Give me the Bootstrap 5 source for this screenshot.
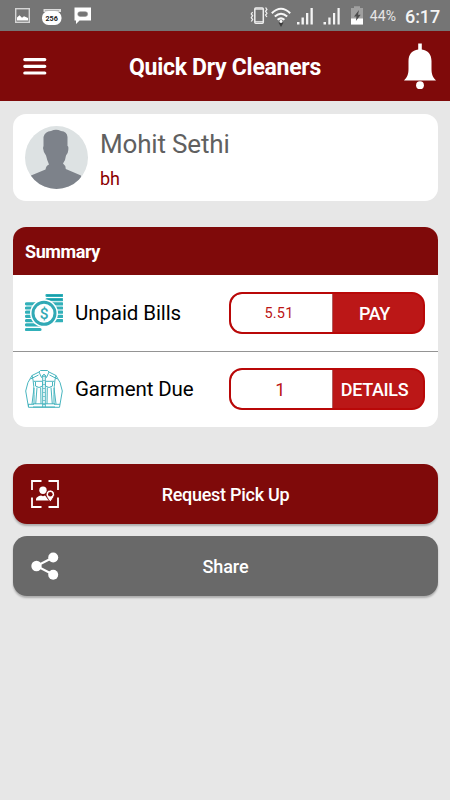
<!DOCTYPE html>
<html lang="en">
<head>
<meta charset="utf-8">
<meta name="viewport" content="width=device-width, initial-scale=1">
<title>Quick Dry Cleaners</title>
<link href="https://cdn.jsdelivr.net/npm/bootstrap@5.3.0/dist/css/bootstrap.min.css" rel="stylesheet">
<style>
body{font-family:Roboto,"Liberation Sans",sans-serif;background:#e7e7e7;min-height:800px;overflow:hidden}
svg{display:block;flex:none}
.status-bar{height:31px;background:#757575;color:#f4f4f4}
.status-right{padding-right:11px}
.battery-text{font-size:14px;line-height:31px;margin-left:6px;padding-top:1px;color:#e6e6e6;letter-spacing:.1px}
.clock{font-size:18px;line-height:31px;font-weight:500;margin-left:9px;width:34px;letter-spacing:-.1px;padding-top:1px;white-space:nowrap}
.app-bar{height:70px;background:#7f0a0a;color:#fff;padding:0 14px 1px 22px}
.app-title{font-size:23px;font-weight:700;letter-spacing:-.28px;line-height:28px;padding:4px 1px 0 0}
.page{padding:12.5px 12.5px 0}
.panel{border:0;border-radius:13px;overflow:hidden}
.profile{height:87.5px;padding:0 12.5px}
.person{font-size:26px;line-height:30px;color:#606060;letter-spacing:-.17px;padding-top:4px}
.place{font-size:18px;line-height:22px;color:#8b0000;margin-top:9px}
.summary{margin-top:25.5px;height:200px}
.summary-head{height:48.5px;background:#7f0a0a;color:#fff;padding:2px 12.5px 0;font-size:18px;font-weight:700;letter-spacing:-.4px}
.item{height:75.5px;padding:0 12.5px;color:#000;font-size:20.5px;letter-spacing:-.1px}
.item+.item{border-top:1px solid #949494}
.item-label{margin-left:12px;padding-top:2px}
.pill{width:196px;height:42px;border:2px solid #b90808;border-radius:13px;overflow:hidden;background:#b90808}
.pill-value{width:101px;background:#fff;border-radius:11px 0 0 11px;color:#bb1616;font-size:14.5px;letter-spacing:.15px;padding:3px 5px 0 0}
.pill-value.count{font-size:18px;padding:1px 2px 0 0}
.pill-btn{background:#bb1717;color:#fff;font-size:18px;font-weight:500;letter-spacing:-.35px;border:0;border-left:1px solid #b06060;border-radius:0;padding:2px 7px 0 0}
.pill-btn:hover{background:#bb1717;color:#fff}
.action{height:60px;border:0;border-radius:14px;color:#fff;font-size:18px;font-weight:500;letter-spacing:-.27px;padding:0 18px;box-shadow:0 2px 2px rgba(0,0,0,.25)}
.action span{margin-right:27px;padding-top:1px}
.pickup,.pickup:hover{background:#7f0a0a;color:#fff}
.share,.share:hover{background:#696969;color:#fff}
.share{letter-spacing:-.1px}
.actions{margin-top:37.5px;gap:12.3px}
</style>
<script src="https://cdn.jsdelivr.net/npm/bootstrap@5.3.0/dist/js/bootstrap.bundle.min.js"></script>
</head>
<body>
<div class="status-bar d-flex align-items-center">
  <svg width="100" height="31" viewBox="0 0 100 31">
    <rect x="15.7" y="8.700" width="13.600" height="13.600" fill="none" stroke="#d5d5d5" stroke-width="1.400"/>
    <path d="M17 20.500v-3l2.500-2.200 2.500 2.500 2-1.500 4 1.800v2.400z" fill="#fff"/>
    <path d="M43.500 9h17.500v3H43.500z" fill="#dcdcdc"/><path d="M45 10.200h14v1H45z" fill="#aaa"/>
    <rect x="42" y="11" width="19.500" height="14" rx="6.500" fill="#fff"/>
    <text x="51.700" y="21.300" text-anchor="middle" font-family="Roboto" font-size="7.200" font-weight="700" fill="#222">256</text>
    <path d="M74.500 7.500H91V20.500H79.500L76 24v-3.500h-1.500z" fill="#fff"/>
    <rect x="77.700" y="11.700" width="10" height="4.800" rx="2.400" fill="#757575" stroke="#999" stroke-width=".6"/>
  </svg>
  <div class="status-right ms-auto d-flex align-items-center">
    <svg width="116" height="31" viewBox="247 0 116 31">
      <rect x="253.800" y="8" width="8.500" height="15.300" rx="1" fill="none" stroke="#eee" stroke-width="1.500"/><path d="M254 9.200h8M254 21.700h8" stroke="#eee"/>
      <path d="M251.600 12l-1.300 2 1.300 1.700-1.300 2 1.300 1.800-1.300 2M264.600 7.500l1.300 2-1.300 1.800 1.300 2-1.300 1.700 1.300 2" fill="none" stroke="#eee" stroke-width="1.300"/>
      <path d="M270.800 13.200Q280 4.400 289.200 13.200M273.800 16.600Q280 10.800 286.200 16.600M276.600 19.800Q280 16.900 283.400 19.800" fill="none" stroke="#f7f7f7" stroke-width="2"/>
      <path d="M277.500 22.500h5l-2.500 4.500z" fill="#3d3d3d"/><circle cx="280" cy="21.500" r="1.400" fill="#fff"/>
      <path d="M296 22h2.500v2.400H296zM300.500 17.500h2.400v6.900h-2.400zM305 13h2.300v11.400H305zM309.500 8h2.300v16.400h-2.300z" fill="#f4f4f4"/>
      <path d="M322.500 22h2.500v2.400h-2.500zM327.300 17.500h2.300v6.900h-2.300zM332 13h2.200v11.400H332zM336.500 8h2.200v16.400h-2.200z" fill="#f4f4f4"/>
      <path d="M350 8h3V6.300h6V8h3v16.500h-12z" fill="#a0a0a0"/><path d="M350 18.500h12v6h-12z" fill="#fff"/><path d="M358 10l-5 6.500h2.500l-.6 4.500 4.800-6.300H357z" fill="#4e4e4e"/>
    </svg>
    <div class="battery-text">44%</div><div class="clock">6:17</div>
  </div>
</div>
<nav class="app-bar d-flex align-items-center justify-content-between">
  <svg width="25" height="19" viewBox="0 0 25 19"><path d="M2.800 3.600h20M2.800 10.300h20M2.800 17h20" stroke="#fff" stroke-width="3.200" stroke-linecap="round"/></svg>
  <div class="app-title">Quick Dry Cleaners</div>
  <svg width="32" height="48" viewBox="0 0 32 48"><path d="M14.200 1.500h3.600v6C24 8.300 27.500 12.500 27.500 19v8C27.500 32.500 29 35.500 32 38.500H0c3-3 4.500-6 4.500-11.500v-8C4.500 12.500 8 8.300 14.200 7.500z" fill="#fff"/><circle cx="16" cy="43.200" r="3.900" fill="#fff"/></svg>
</nav>
<main class="page">
  <section class="card panel profile flex-row align-items-center">
    <svg width="63" height="63" viewBox="0 0 63 63"><defs><clipPath id="face"><circle cx="31.500" cy="31.500" r="31.500"/></clipPath></defs><g clip-path="url(#face)"><path d="M0 0h63v63H0z" fill="#dde2e3"/><path d="M18.500 20V11Q20 5.500 26 5Q31 2.500 36 5Q42 5.500 42.500 11V20Q43.700 20 43.300 24Q43 28 41 29.500Q40.500 34.500 38 37.500Q40.500 39 40.800 43L56 49.500L58 63H4l2-13.500L20.500 43.500Q21 39.500 24 38.500Q22 34 21 29.500Q18.500 27 18 22Z" fill="#7d828a"/></g></svg>
    <div class="ms-2 ps-1"><div class="person">Mohit Sethi</div><div class="place">bh</div></div>
  </section>
  <section class="card panel summary">
    <div class="summary-head d-flex align-items-center">Summary</div>
    <div class="item d-flex align-items-center">
      <svg width="38" height="38" viewBox="0 0 38 38"><path d="M22 1.400h15M22 5.600h15M22 9.800h15M22 14h15M22 18.200h15M22 22.400h15M22 26.600h15M1.500 9.800H16M1.500 14H16M1.500 18.200H16M1.500 22.400H16M1.500 26.600H16M1.500 30.800H15M1.500 35.500H15" stroke="#31b0b9" stroke-width="3.200" stroke-linecap="round"/><path d="M22 1.400h15M22 5.600h15" stroke="#169ba8"/><circle cx="19" cy="19.300" r="14" fill="#fff"/><circle cx="19" cy="19.300" r="11" fill="#fff" stroke="#31a9b5" stroke-width="3"/><text x="19" y="24.800" text-anchor="middle" font-family="Roboto" font-size="15.500" font-weight="500" fill="#31a9b5">$</text></svg>
      <div class="item-label">Unpaid Bills</div>
      <div class="pill d-flex ms-auto"><div class="pill-value d-flex align-items-center justify-content-center">5.51</div><button class="btn pill-btn flex-fill">PAY</button></div>
    </div>
    <div class="item d-flex align-items-center">
      <svg width="38" height="38" viewBox="0 0 38 38" fill="none" stroke="#48b5bf" stroke-width="1"><path d="M14 2l-7 3.500Q2 12 .7 21L3.500 37.300h31L37.300 21Q36 12 31 5.500L24 2M14 2l1.500-1.500h7L24 2l-2.500 5.500L19 4l-2.500 3.500zM7 5.500Q9.500 13 9 34M31 5.500Q28.500 13 29 34M3 34.300h6M29 34.300h6M8 33.800h22M8 37h22M17.700 5v32M20.300 5v32M8.700 11.300h9M20.300 11.300h9M10.500 12v4l3.500 1.500 3.500-1.500v-4M20.500 12v4l3.500 1.500 3.500-1.500v-4M12 17.500L10.700 34M15.700 17.500L16 34M26 17.500L27.300 34M22.300 17.500L22 34M3.500 37V34M9 18L7 34M29 18l2 16M5.500 9l8-4M32.500 9l-8-4"/><path d="M19 6v30" stroke-dasharray="1 3" stroke="#169ba8"/></svg>
      <div class="item-label">Garment Due</div>
      <div class="pill d-flex ms-auto"><div class="pill-value count d-flex align-items-center justify-content-center">1</div><button class="btn pill-btn flex-fill">DETAILS</button></div>
    </div>
  </section>
  <div class="actions d-flex flex-column">
    <button class="btn action pickup d-flex align-items-center">
      <svg width="28" height="28" viewBox="0 0 28 28"><path d="M1 10V1h9.500M17.500 1H27v9M27 17.500v9.500h-9.500M10.500 27H1v-9.500" fill="none" stroke="#fff" stroke-width="1.800"/><circle cx="12" cy="10.300" r="3.700" fill="#fff"/><path d="M5 20.500v-1.500q.5-2.500 5-3.500l2 .8 2-.8 4.500 5z" fill="#fff"/><path d="M19.300 22q-4.300-5.300-4.300-7.800a4.300 4.300 0 0 1 8.600 0Q23.600 16.700 19.300 22z" fill="#fff" stroke="#7f0a0a" stroke-width="1"/><circle cx="19.300" cy="14.200" r="2.300" fill="#7f0a0a"/></svg>
      <span class="flex-fill">Request Pick Up</span>
    </button>
    <button class="btn action share d-flex align-items-center">
      <svg width="28" height="28" viewBox="0 0 28 28"><path d="M22 5.500L5.500 14 22 22.500" fill="none" stroke="#fff" stroke-width="2"/><g fill="#fff"><circle cx="22.200" cy="5.500" r="5"/><circle cx="5.500" cy="14" r="5.200"/><circle cx="22.200" cy="22.700" r="5"/></g></svg>
      <span class="flex-fill">Share</span>
    </button>
  </div>
</main>
</body>
</html>
